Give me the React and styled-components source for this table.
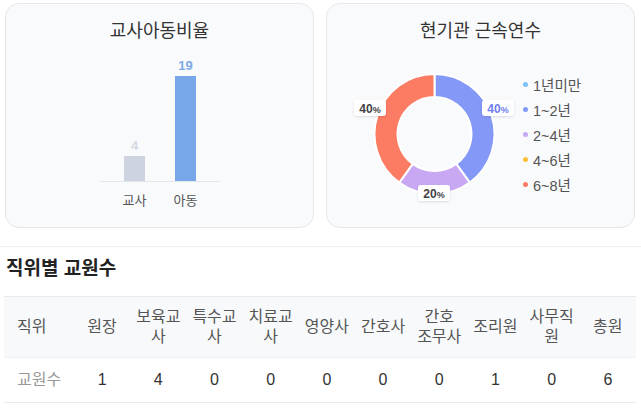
import styled, { createGlobalStyle } from "styled-components";

const GlobalStyle = createGlobalStyle`
    body {
        margin: 0;
        background: #ffffff;
        font-family: "Liberation Sans", "Noto Sans CJK KR", sans-serif;
        color: #333;
    }
`;

const tenure = [
    { label: "1년미만", value: 0, color: "#7cc2f8" },
    { label: "1~2년", value: 2, color: "#8499f7" },
    { label: "2~4년", value: 1, color: "#c8a8f3" },
    { label: "4~6년", value: 0, color: "#fbc13d" },
    { label: "6~8년", value: 2, color: "#fc7b63" },
];

const staff = [
    { title: "원장", count: 1 },
    { title: "보육교사", count: 4 },
    { title: "특수교사", count: 0 },
    { title: "치료교사", count: 0 },
    { title: "영양사", count: 0 },
    { title: "간호사", count: 0 },
    { title: "간호\n조무사", count: 0 },
    { title: "조리원", count: 1 },
    { title: "사무직원", count: 0 },
    { title: "총원", count: 6 },
];

const polar = (cx, cy, r, deg) => {
    const rad = (deg * Math.PI) / 180;
    return [cx + r * Math.sin(rad), cy - r * Math.cos(rad)];
};

const arcPath = (cx, cy, r0, r1, a0, a1) => {
    const large = a1 - a0 > 180 ? 1 : 0;
    const [x1, y1] = polar(cx, cy, r1, a0);
    const [x2, y2] = polar(cx, cy, r1, a1);
    const [x3, y3] = polar(cx, cy, r0, a1);
    const [x4, y4] = polar(cx, cy, r0, a0);
    return `M${x1} ${y1} A${r1} ${r1} 0 ${large} 1 ${x2} ${y2} L${x3} ${y3} A${r0} ${r0} 0 ${large} 0 ${x4} ${y4} Z`;
};

const BarChart = () => (
    <svg width="307" height="186">
        <line x1="94" y1="140.5" x2="214" y2="140.5" stroke="#e3e6ea" strokeWidth="1" />
        <rect x="118" y="115" width="21" height="25" fill="#cdd3e1" />
        <rect x="169" y="35" width="21" height="105" fill="#78a7e9" />
        <text x="128.5" y="109" textAnchor="middle" fontSize="13" fontWeight="700" fill="#d2d7e2">4</text>
        <text x="179.5" y="29" textAnchor="middle" fontSize="13" fontWeight="700" fill="#7ea9ea">19</text>
        <text x="128.5" y="164" textAnchor="middle" fontSize="13" fill="#555">교사</text>
        <text x="179.5" y="164" textAnchor="middle" fontSize="13" fill="#555">아동</text>
    </svg>
);

const PieLabel = ({ x, y, text, color }) => (
    <g>
        <rect x={x - 16} y={y - 8} width="32" height="16" rx="3" fill="#fff" filter="url(#labelShadow)" />
        <text x={x} y={y + 4.5} textAnchor="middle" fontSize="12" fontWeight="700" fill={color}>
            {text}
            <tspan fontSize="9">%</tspan>
        </text>
    </g>
);

const Donut = () => {
    const total = tenure.reduce((s, t) => s + t.value, 0);
    let start = 0;
    const slices = tenure
        .filter((t) => t.value > 0)
        .map((t) => {
            const end = start + (t.value / total) * 360;
            const d = arcPath(107.5, 93, 37, 60, start, end);
            start = end;
            return <path key={t.label} d={d} fill={t.color} stroke="#fff" strokeWidth="2" />;
        });

    return (
        <svg width="190" height="186">
            <defs>
                <filter id="labelShadow" x="-30%" y="-40%" width="160%" height="180%">
                    <feDropShadow dx="0" dy="1" stdDeviation="1" floodColor="#000" floodOpacity="0.12" />
                </filter>
            </defs>
            {slices}
            <PieLabel x={43} y={67} text="40" color="#444" />
            <PieLabel x={171} y={67} text="40" color="#6f80f1" />
            <PieLabel x={107} y={152} text="20" color="#444" />
        </svg>
    );
};

const App = () => {
    return (
        <>
            <GlobalStyle />
            <Page>
                <CardRow>
                    <Card>
                        <CardTitle>교사아동비율</CardTitle>
                        <CardBody>
                            <BarChart />
                        </CardBody>
                    </Card>
                    <Card>
                        <CardTitle>현기관 근속연수</CardTitle>
                        <CardBody>
                            <Donut />
                            <Legend>
                                {tenure.map((t) => (
                                    <LegendItem key={t.label}>
                                        <Dot $color={t.color} />
                                        {t.label}
                                    </LegendItem>
                                ))}
                            </Legend>
                        </CardBody>
                    </Card>
                </CardRow>

                <Section>
                    <Heading>직위별 교원수</Heading>
                    <StaffTable>
                        <colgroup>
                            <col style={{ width: 70 }} />
                            {staff.map((s) => (
                                <col key={s.title} />
                            ))}
                        </colgroup>
                        <thead>
                            <tr>
                                <HeadCell $first>직위</HeadCell>
                                {staff.map((s) => (
                                    <HeadCell key={s.title}>{s.title}</HeadCell>
                                ))}
                            </tr>
                        </thead>
                        <tbody>
                            <tr>
                                <BodyCell $first>교원수</BodyCell>
                                {staff.map((s) => (
                                    <BodyCell key={s.title}>{s.count}</BodyCell>
                                ))}
                            </tr>
                        </tbody>
                    </StaffTable>
                </Section>
            </Page>
        </>
    );
};

export default App;

const Page = styled.div`
    width: 641px;
    height: 408px;
    overflow: hidden;
    padding-top: 3px;
    box-sizing: border-box;
`;

const CardRow = styled.div`
    display: flex;
    gap: 12px;
    padding: 0 6px 0 5px;
    padding-bottom: 18px;
    border-bottom: 1px solid #eeeff1;
`;

const Card = styled.div`
    width: 309px;
    height: 225px;
    box-sizing: border-box;
    background: #f9fafc;
    border: 1px solid #e5e7ea;
    border-radius: 14px;
    padding-top: 17px;
    display: flex;
    flex-direction: column;
`;

const CardTitle = styled.h2`
    margin: 0;
    font-size: 18px;
    line-height: 20px;
    font-weight: 400;
    text-align: center;
    color: #333;
`;

const CardBody = styled.div`
    flex: 1;
    display: flex;
    align-items: center;
`;

const Legend = styled.ul`
    list-style: none;
    margin: 0;
    padding: 0 0 0 6px;
    display: flex;
    flex-direction: column;
`;

const LegendItem = styled.li`
    display: flex;
    align-items: center;
    gap: 5px;
    height: 25px;
    font-size: 14.5px;
    color: #555;
`;

const Dot = styled.span`
    width: 5px;
    height: 5px;
    border-radius: 50%;
    background: ${(p) => p.$color};
`;

const Section = styled.div`
    padding: 10px 5px 0 4px;
`;

const Heading = styled.h3`
    margin: 0 0 15px 2px;
    font-size: 19px;
    line-height: 24px;
    font-weight: 700;
    color: #222;
`;

const StaffTable = styled.table`
    width: 632px;
    table-layout: fixed;
    border-collapse: collapse;
    font-size: 16px;
    line-height: 20px;
    border-top: 1px solid #e8e9ec;
`;

const HeadCell = styled.th`
    background: #f8f9fb;
    font-weight: 400;
    color: #555;
    padding: 10px 2px;
    height: 40px;
    text-align: ${(p) => (p.$first ? "left" : "center")};
    padding-left: ${(p) => (p.$first ? "13px" : "2px")};
    white-space: pre-line;
    word-break: break-all;
`;

const BodyCell = styled.td`
    height: 20px;
    padding: 12px 2px;
    color: ${(p) => (p.$first ? "#999" : "#333")};
    text-align: ${(p) => (p.$first ? "left" : "center")};
    padding-left: ${(p) => (p.$first ? "13px" : "2px")};
    border-bottom: 1px solid #e8e9ec;
    border-top: 1px solid #f1f2f4;
`;
